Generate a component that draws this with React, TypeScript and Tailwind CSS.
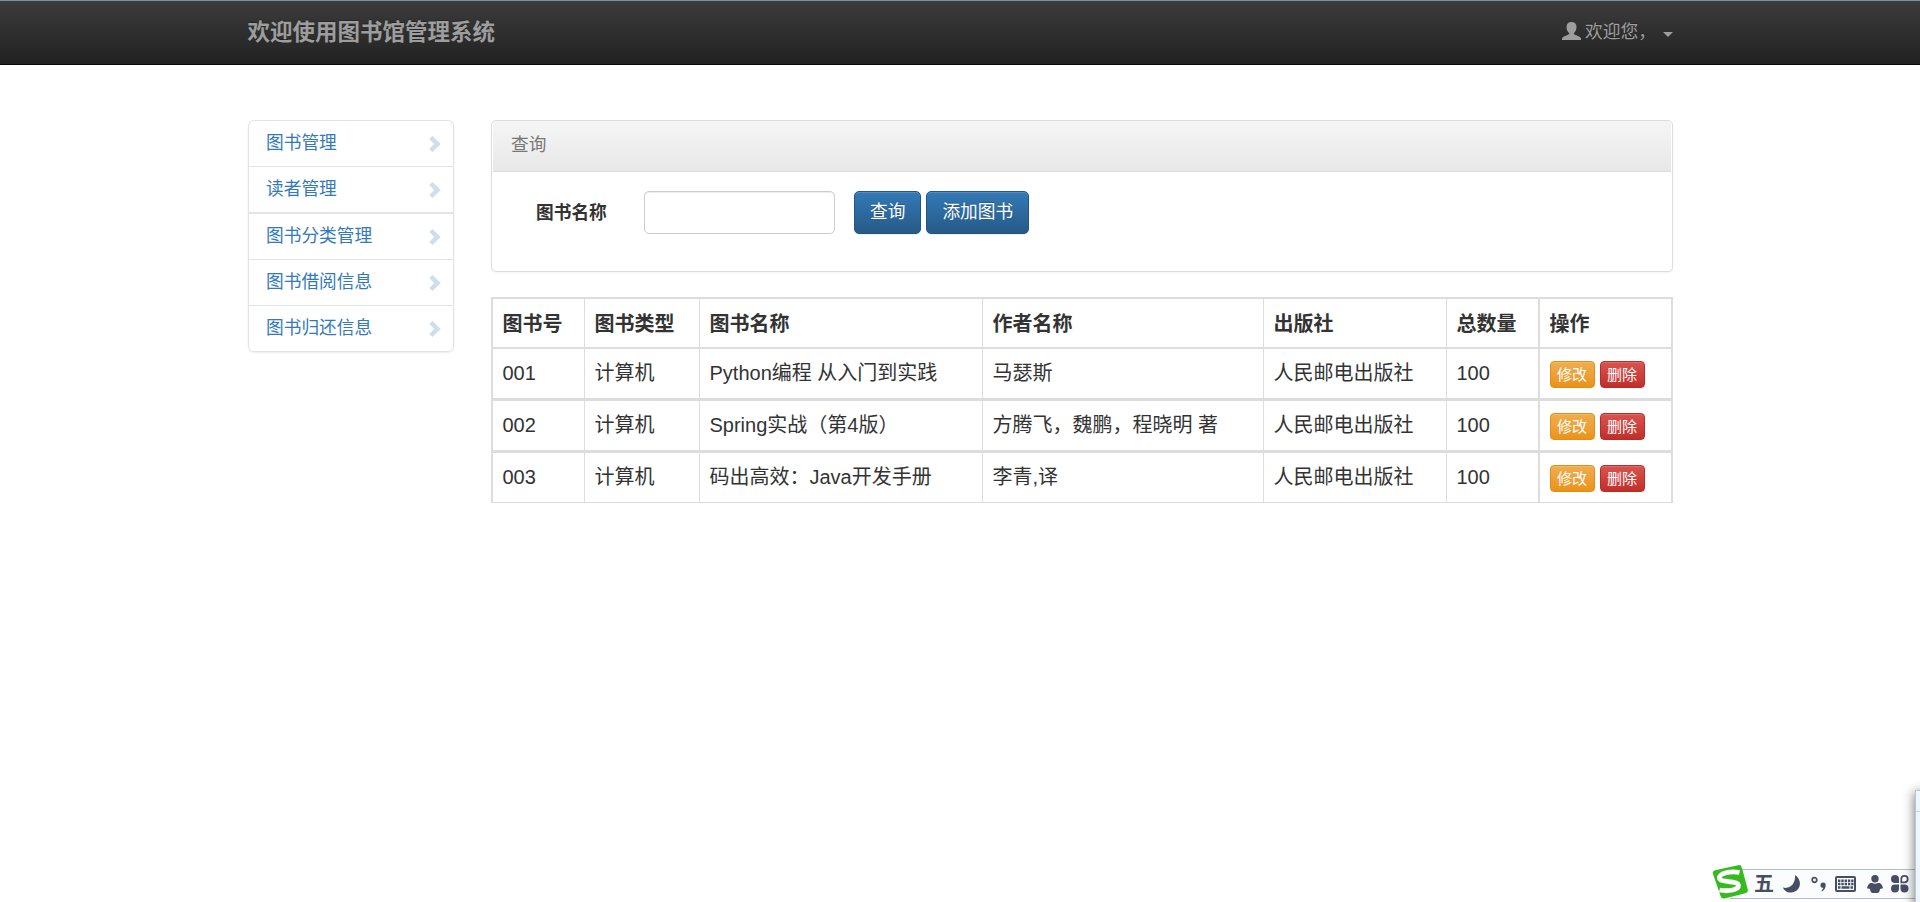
import { type ReactNode } from 'react';

interface Book {
  id: string;
  type: string;
  name: string;
  author: string;
  press: string;
  total: number;
}

const menus = [
  { label: '图书管理', className: 'h-[46px] border-t rounded-t-md' },
  { label: '读者管理', className: 'h-[46px] border-t' },
  { label: '图书分类管理', className: 'h-[47px] border-t-2' },
  { label: '图书借阅信息', className: 'h-[46px] border-t' },
  { label: '图书归还信息', className: 'h-[47px] border-y rounded-b-md' },
];

const books: Book[] = [
  { id: '001', type: '计算机', name: 'Python编程 从入门到实践', author: '马瑟斯', press: '人民邮电出版社', total: 100 },
  { id: '002', type: '计算机', name: 'Spring实战（第4版）', author: '方腾飞，魏鹏，程晓明 著', press: '人民邮电出版社', total: 100 },
  { id: '003', type: '计算机', name: '码出高效：Java开发手册', author: '李青,译', press: '人民邮电出版社', total: 100 },
];

const headers = ['图书号', '图书类型', '图书名称', '作者名称', '出版社', '总数量', '操作'];

// Row separators get thicker between data rows
const rowBorders = ['border-b-[3px]', 'border-b-[3px]', 'border-b'];
const rowHeights = ['h-[52px]', 'h-[52px]', 'h-[50px]'];

function UserIcon() {
  return (
    <svg width="19" height="18" viewBox="0 0 19 18" className="-mt-1" fill="currentColor">
      <path d="M9.500 0C6.400 0 4.500 1.800 4.500 4.700c0 2.700 1 5 2.500 6.200.4.6.2 1.200-.6 1.600L1.500 14.700C.5 15.200 0 15.900 0 16.800V18h19v-1.200c0-.9-.5-1.600-1.500-2.100l-4.900-2.200c-.8-.4-1-1-.6-1.600 1.500-1.200 2.500-3.500 2.500-6.200C14.500 1.800 12.600 0 9.500 0z" />
    </svg>
  );
}

function ChevronIcon() {
  return (
    <svg width="12" height="16" viewBox="0 0 12 16" className="text-[#cddeed]" fill="currentColor">
      <path d="M3.500 0 11.700 8 3.500 16 .2 12.900 5.200 8 .2 3.100z" />
    </svg>
  );
}

function Navbar() {
  return (
    <nav className="h-[65px] border-t border-t-[#6d9aa0] border-b border-b-[#080808] bg-linear-to-b from-[#3c3c3c] to-[#222] text-[#9d9d9d]">
      <div className="flex h-full items-center justify-between pl-[247.5px] pr-[247px] [text-shadow:0_-1px_0_rgba(0,0,0,0.25)]">
        <span className="text-[22.5px] font-bold">欢迎使用图书馆管理系统</span>
        <span className="flex items-center text-[17.75px]">
          <UserIcon />
          <span className="ml-1 w-[71px] whitespace-nowrap">欢迎您，</span>
          <svg width="10" height="5" viewBox="0 0 10 5" className="ml-[7px] mt-1" fill="currentColor">
            <path d="M0 0h10L5 5z" />
          </svg>
        </span>
      </div>
    </nav>
  );
}

function Sidebar() {
  return (
    <ul className="h-[232px] w-[206px] shrink-0 rounded-md shadow-[0_1px_2px_rgba(0,0,0,0.075)]">
      {menus.map(menu => (
        <li key={menu.label} className={`flex items-center justify-between border-x border-[#e3e3e3] bg-white pl-[17px] pr-[12px] ${menu.className}`}>
          <a href="#" className="-mt-px text-[17.7px] leading-[25px] text-[#337ab7]">{menu.label}</a>
          <ChevronIcon />
        </li>
      ))}
    </ul>
  );
}

function PrimaryButton({ children }: { children: ReactNode }) {
  return (
    <button className="h-[43px] rounded-[5px] border border-[#245580] bg-linear-to-b from-[#337ab7] to-[#265a88] px-[15px] pb-[1px] text-[17.7px] text-white shadow-[inset_0_1px_0_rgba(255,255,255,0.15),0_1px_1px_rgba(0,0,0,0.075)] [text-shadow:0_-1px_0_rgba(0,0,0,0.2)]">
      {children}
    </button>
  );
}

function SearchPanel() {
  return (
    <section className="h-[152px] rounded-[5px] border border-[#ddd] bg-white shadow-[0_1px_2px_rgba(0,0,0,0.05)]">
      <div className="mx-px h-[51px] rounded-t-[4px] border-b border-[#ddd] bg-linear-to-b from-[#f5f5f5] to-[#e8e8e8] px-[18px] text-[17.7px] leading-[49px] text-[#777]">
        查询
      </div>
      <form className="flex items-center pl-[44px] pt-[19px]">
        <label className="w-[108px] pt-px text-[17.7px] font-bold">图书名称</label>
        <input className="h-[43px] w-[191px] rounded-[5px] border border-[#ccc] bg-white px-3 shadow-[inset_0_1px_1px_rgba(0,0,0,0.075)]" />
        <div className="ml-[19px] flex gap-[5px]">
          <PrimaryButton>查询</PrimaryButton>
          <PrimaryButton>添加图书</PrimaryButton>
        </div>
      </form>
    </section>
  );
}

function BookTable() {
  return (
    <table className="mt-[25px] w-[1182px] table-fixed border-separate border-spacing-0 border-l-2 border-t-2 border-[#ddd] text-[20px]">
      <colgroup>
        <col className="w-[92px]" />
        <col className="w-[115px]" />
        <col className="w-[283px]" />
        <col className="w-[281px]" />
        <col className="w-[183px]" />
        <col className="w-[93px]" />
        <col className="w-[133px]" />
      </colgroup>
      <thead>
        <tr>
          {headers.map((header, i) => (
            <th key={header} className={`h-[50px] border-b-2 border-[#ddd] pt-[2px] pb-0 pl-[9.5px] text-left font-bold ${i > 4 ? 'border-r-2' : 'border-r'}`}>
              {header}
            </th>
          ))}
        </tr>
      </thead>
      <tbody>
        {books.map((book, row) => {
          const cell = `border-[#ddd] p-0 pl-[9.5px] pb-[1px] ${rowBorders[row]} ${rowHeights[row]}`;
          return (
            <tr key={book.id}>
              <td className={`${cell} border-r`}>{book.id}</td>
              <td className={`${cell} border-r`}>{book.type}</td>
              <td className={`${cell} border-r`}>{book.name}</td>
              <td className={`${cell} border-r`}>{book.author}</td>
              <td className={`${cell} border-r`}>{book.press}</td>
              <td className={`${cell} border-r-2`}>{book.total}</td>
              <td className={`${cell} border-r-2`}>
                <div className="flex gap-[5px] pt-[2px] text-[15px] leading-[23px] text-white [text-shadow:0_-1px_0_rgba(0,0,0,0.2)]">
                  <button className="h-[27px] w-[45px] rounded-[4px] border border-[#e38d13] bg-linear-to-b from-[#f0ad4e] to-[#eb9316] shadow-[inset_0_1px_0_rgba(255,255,255,0.15)]">修改</button>
                  <button className="h-[27px] w-[45px] rounded-[4px] border border-[#b92c28] bg-linear-to-b from-[#d9534f] to-[#c12e2a] shadow-[inset_0_1px_0_rgba(255,255,255,0.15)]">删除</button>
                </div>
              </td>
            </tr>
          );
        })}
      </tbody>
    </table>
  );
}

// Input method toolbar floating over the bottom right corner
function InputToolbar() {
  return (
    <div className="absolute bottom-0 right-0 h-[122px] w-[220px] overflow-hidden">
      <div className="absolute left-[30px] top-[89px] flex h-[30px] w-[190px] items-center border-y border-[#aebfcb] bg-[#fafcfe] text-[#474d63]">
        <span className="ml-[24px] w-[20px] text-[20px] font-bold leading-none">五</span>
        <svg width="18" height="18" viewBox="0 0 18 18" className="ml-[9px]" fill="currentColor">
          <path d="M12 0c8 5 6 17-4 17.500C4 17.700 1 15.500 0 12.500c7 2 13-4 12-12.500z" />
        </svg>
        <svg width="16" height="16" viewBox="0 0 16 16" className="ml-[10px]" fill="currentColor">
          <circle cx="3.500" cy="4" r="2.300" fill="none" stroke="currentColor" strokeWidth="1.700" />
          <path d="M9.500 9a2.600 2.600 0 1 1 5.200 0c0 3-1.500 5.500-4 6.500v-1.400c1-.6 1.400-1.300 1.500-2.300A2.600 2.600 0 0 1 9.500 9z" />
        </svg>
        <svg width="21" height="16" viewBox="0 0 21 16" className="ml-[8px]">
          <rect x="1" y="1" width="19" height="14" rx="1" fill="none" stroke="currentColor" strokeWidth="2" />
          <path d="M3 4.700h15.500M3 8h15.500" stroke="currentColor" strokeWidth="2.400" strokeDasharray="2.400 .9" />
          <path d="M3 11.500h2.500M6.500 11.500h8M15.500 11.500H18" stroke="currentColor" strokeWidth="2.400" />
        </svg>
        <svg width="16" height="18" viewBox="0 0 16 18" className="ml-[11px]" fill="currentColor">
          <circle cx="8" cy="3.700" r="3.700" />
          <path d="M3.500 8h1.700c1.700 1.100 3.900 1.100 5.600 0h1.700c2 1 3 2.500 3.500 5.200l-3 .9c-.3 2.500-1.300 3.900-2.700 3.900H5.700C4.300 18 3.300 16.600 3 14.100l-3-.9C.5 10.500 1.500 9 3.500 8z" />
        </svg>
        <svg width="18" height="18" viewBox="0 0 18 18" className="ml-[8px]" fill="currentColor">
          <path d="M4 0a4 4 0 0 1 4 4v4H4a4 4 0 0 1 0-8zM4 9.500h4v4a4 4 0 1 1-4-4zM9.500 9.500h4a4 4 0 1 1-4 4z" />
          <path d="M10.300 7.300V4a3.200 3.200 0 1 1 3.200 3.300z" fill="none" stroke="currentColor" strokeWidth="1.700" />
        </svg>
      </div>
      <svg width="36" height="36" viewBox="0 0 36 36" className="absolute left-[12px] top-[84px]">
        <path d="M3 6.200 26 1.200q3-.6 3.800 2.300l6 22q.6 3-2.400 3.800l-21 5.200q-3 .6-3.800-2.400L.8 9.600q-.6-2.700 2.200-3.400z" fill="#35bb1d" />
        <path d="M27.500 8.500C18 6.500 7.500 9.500 7.500 14c0 5 19 2 19 7.500 0 4-9.500 6.500-19 4.500" fill="none" stroke="#fff" strokeWidth="4.800" />
      </svg>
      <div className="absolute left-[215px] top-[10px] h-[122px] w-[15px] border-l border-t border-[#b9c6cf] bg-[#eef6fd] shadow-[-1px_2px_11px_rgba(0,0,0,0.5)]">
        <div className="mt-[20px] border-t border-[#c5d2dc]" />
      </div>
    </div>
  );
}

export default function App() {
  return (
    <div className="relative h-[902px] overflow-hidden bg-white font-['Liberation_Sans','Noto_Sans_CJK_SC',sans-serif] leading-normal text-[#333]">
      <Navbar />
      <main className="flex items-start pl-[248px] pt-[55px]">
        <Sidebar />
        <div className="ml-[37px] w-[1182px]">
          <SearchPanel />
          <BookTable />
        </div>
      </main>
      <InputToolbar />
    </div>
  );
}
